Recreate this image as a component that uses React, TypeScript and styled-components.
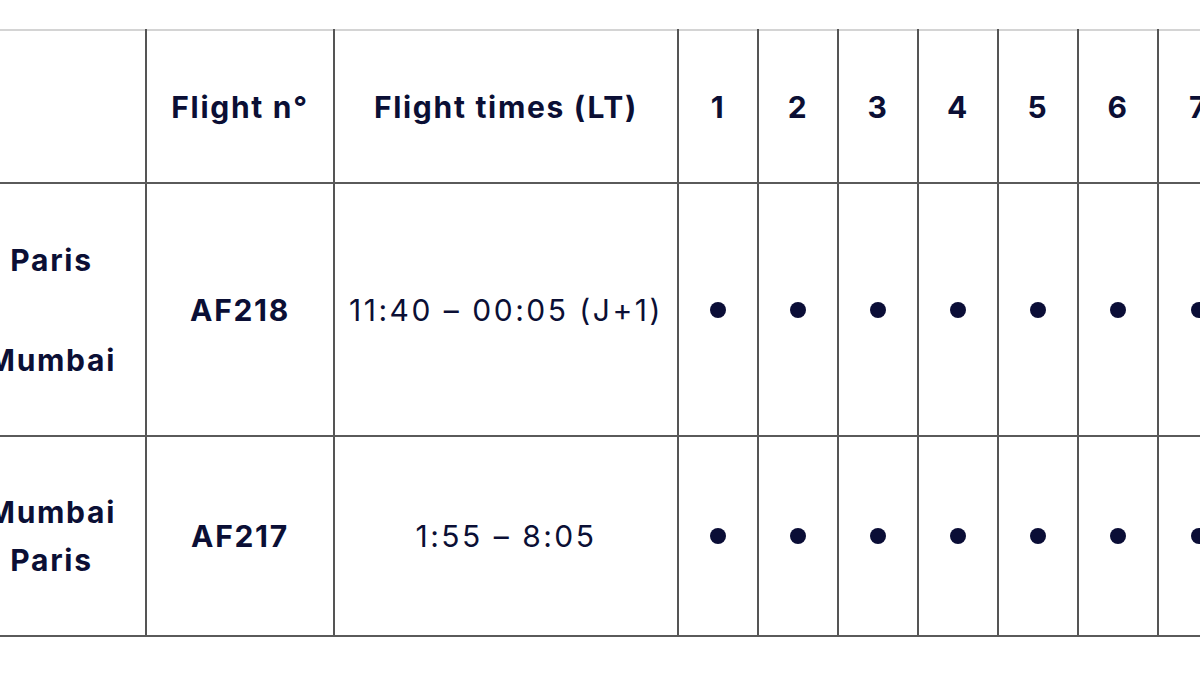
import React from "react";
import styled, { createGlobalStyle } from "styled-components";

const Global = createGlobalStyle`
  html, body { margin: 0; padding: 0; background: #ffffff; }
  body { font-family: Inter, Lato, "Noto Sans", sans-serif; color: #0b0f35; }
`;

const Page = styled.div`
  width: 1200px;
  height: 675px;
  overflow: hidden;
  padding-top: 29px;
  box-sizing: border-box;
`;

const Table = styled.table`
  margin-left: -42px;
  border-collapse: collapse;
  table-layout: fixed;
  width: 1280px;
  border-top: 2px solid #d4d4d4;
`;

const Row = styled.tr<{ $h: number }>`
  height: ${(p) => p.$h}px;
`;

const Cell = styled.td<{ $bold?: boolean; $lh?: number }>`
  border-left: 2px solid #555555;
  border-bottom: 2px solid #5a5a5a;
  text-align: center;
  vertical-align: middle;
  padding: 0;
  font-family: Inter, Lato, sans-serif;
  font-size: 30px;
  letter-spacing: ${(p) => (p.$bold ? "1.7px" : "2.5px")};
  line-height: ${(p) => p.$lh ?? 50}px;
  font-weight: ${(p) => (p.$bold ? 700 : 400)};
  color: #0b0f35;
  white-space: nowrap;
  &:first-child { border-left: none; }
`;

const HeadCell = styled(Cell).attrs({ as: "th" })``;

const Dot = styled.span`
  display: block;
  margin: 0 auto;
  width: 16px;
  height: 16px;
  border-radius: 50%;
  background: #0a0d36;
`;

const days = [1, 2, 3, 4, 5, 6, 7];

export default function App() {
  return (
    <>
      <Global />
      <Page>
        <Table>
          <colgroup>
            <col style={{ width: 188 }} />
            <col style={{ width: 188 }} />
            <col style={{ width: 344 }} />
            {days.map((d) => (
              <col key={d} style={{ width: 80 }} />
            ))}
          </colgroup>
          <thead>
            <Row $h={153}>
              <HeadCell $bold></HeadCell>
              <HeadCell $bold>Flight n°</HeadCell>
              <HeadCell $bold>Flight times (LT)</HeadCell>
              {days.map((d) => (
                <HeadCell key={d} $bold>
                  {d}
                </HeadCell>
              ))}
            </Row>
          </thead>
          <tbody>
            <Row $h={253}>
              <Cell $bold>
                Paris
                <br />
                <br />
                Mumbai
              </Cell>
              <Cell $bold>AF218</Cell>
              <Cell>11:40 – 00:05 (J+1)</Cell>
              {days.map((d) => (
                <Cell key={d}>
                  <Dot />
                </Cell>
              ))}
            </Row>
            <Row $h={200}>
              <Cell $bold $lh={48}>
                Mumbai
                <br />
                Paris
              </Cell>
              <Cell $bold>AF217</Cell>
              <Cell>1:55 – 8:05</Cell>
              {days.map((d) => (
                <Cell key={d}>
                  <Dot />
                </Cell>
              ))}
            </Row>
          </tbody>
        </Table>
      </Page>
    </>
  );
}
